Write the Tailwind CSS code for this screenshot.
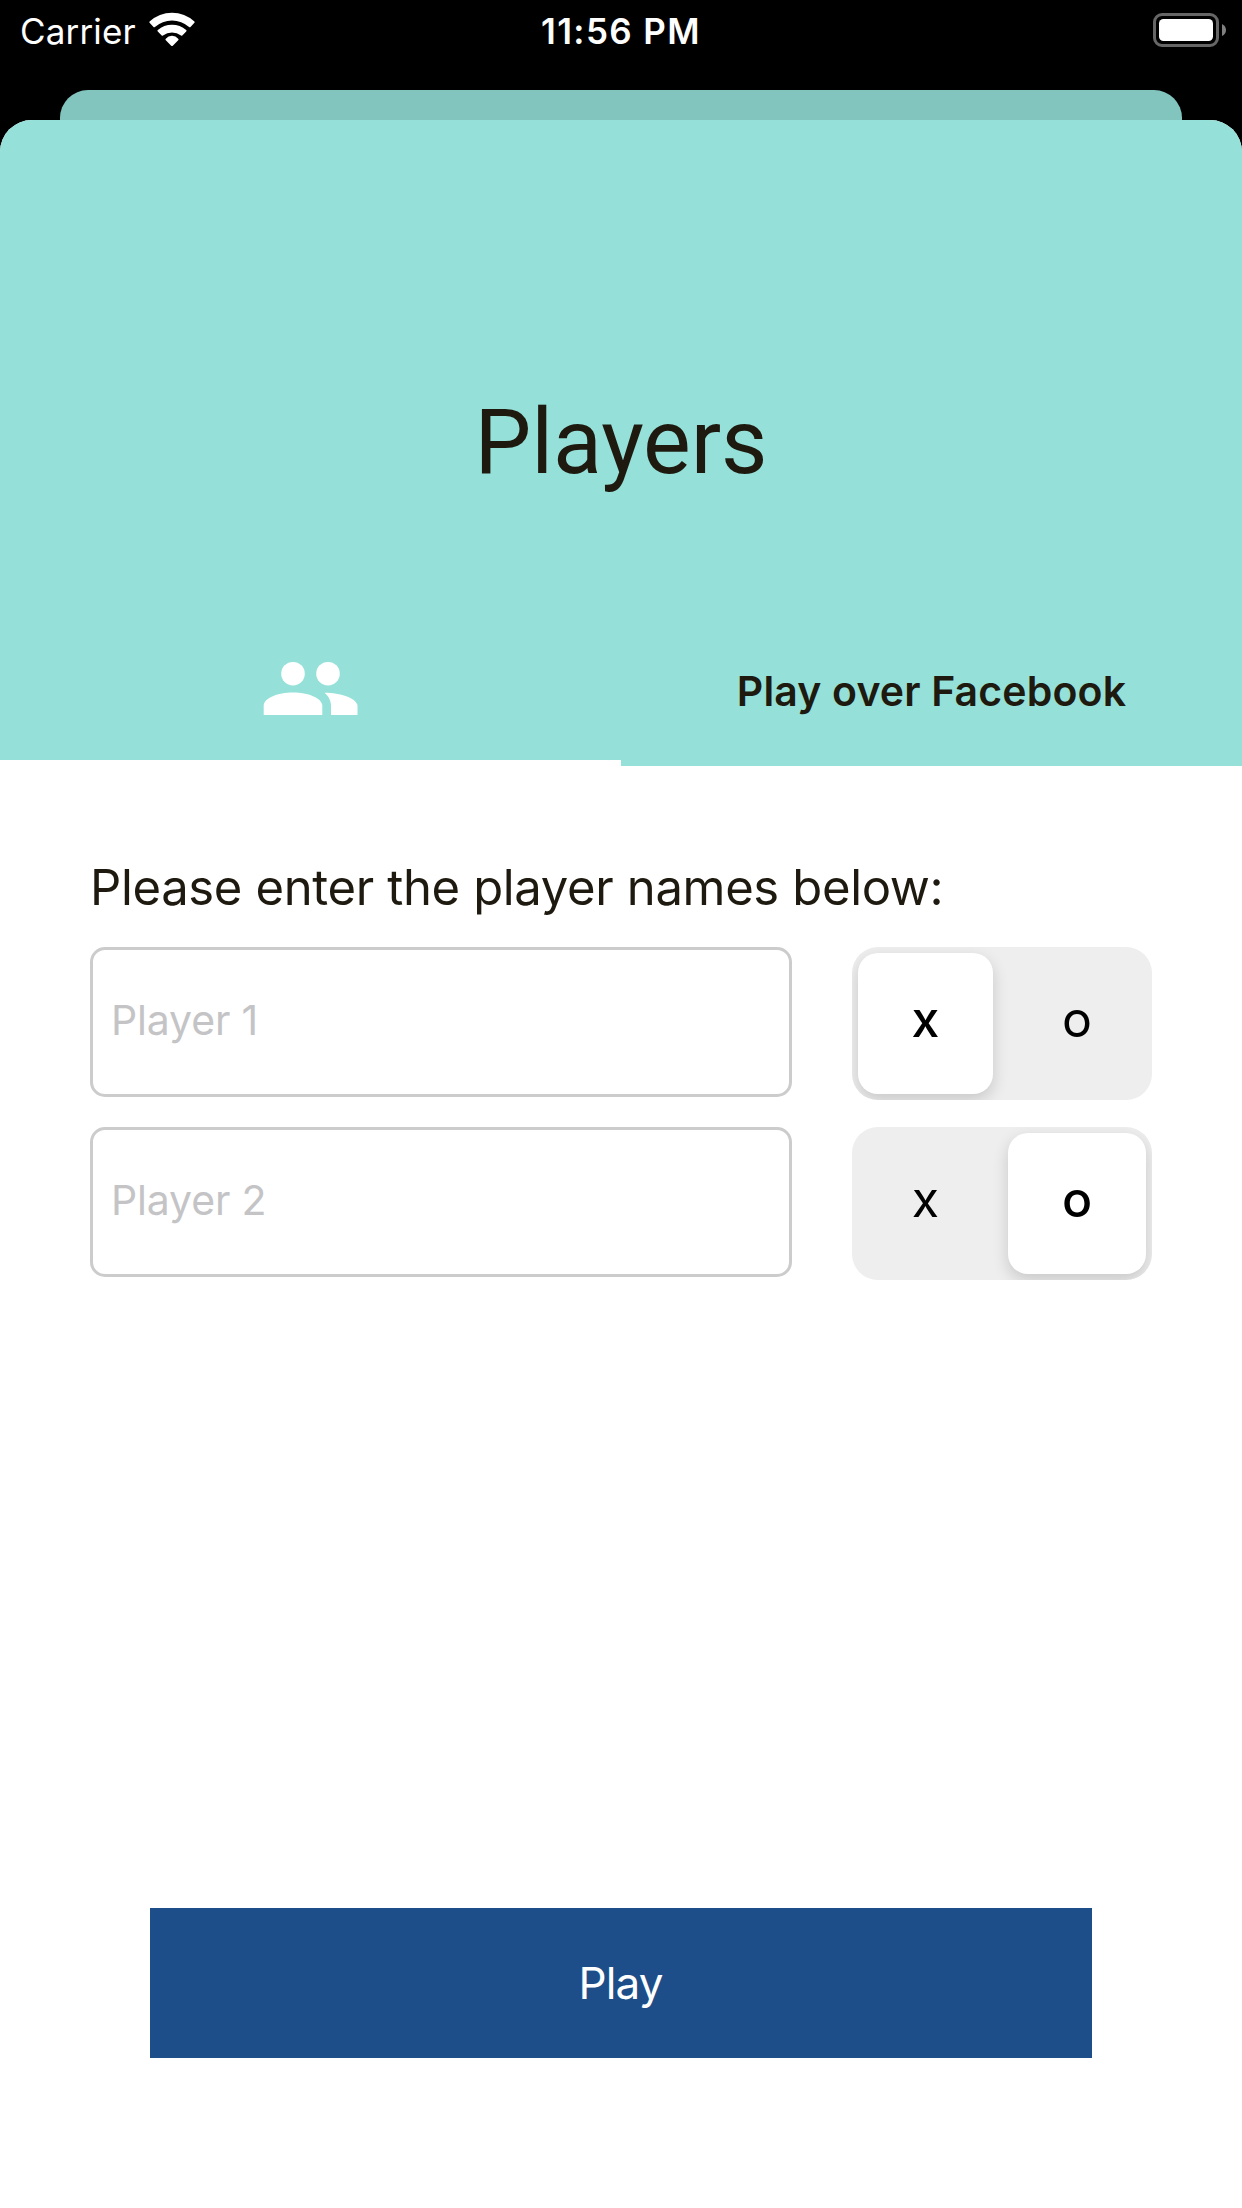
<!DOCTYPE html>
<html lang="en">
<head>
<meta charset="utf-8">
<title>Players</title>
<script src="https://cdn.jsdelivr.net/npm/@tailwindcss/browser@4"></script>
</head>
<body class="bg-black font-['Inter',sans-serif]">
<div class="flex h-[2208px] w-[1242px] flex-col overflow-hidden bg-black">
  <!-- Status bar -->
  <div class="flex h-[90px] shrink-0 items-start justify-between text-[35px] leading-[62px] text-white">
    <div class="flex w-[400px] items-start pl-5">
      <span class="whitespace-nowrap tracking-[0.15px]">Carrier</span>
      <svg class="ml-3 h-[62px] w-[48px]" viewBox="148 0 48 62" fill="#fff"><path d="M149.600 22.800a1 1 0 0 1 0-1.400a33 33 0 0 1 44.800 0a1 1 0 0 1 0 1.400l-3.900 4.200a1 1 0 0 1-1.400 0a26 26 0 0 0-34.200 0a1 1 0 0 1-1.400 0zM157.800 31.600a1 1 0 0 1 0-1.500a21.500 21.500 0 0 1 28.400 0a1 1 0 0 1 0 1.500l-3.900 3.900a1 1 0 0 1-1.300 0a15 15 0 0 0-18 0a1 1 0 0 1-1.300 0zM165.800 40.200a1 1 0 0 1 0-1.500a8 8 0 0 1 12.400 0a1 1 0 0 1 0 1.500l-5.400 5.500a1.100 1.100 0 0 1-1.600 0z"/></svg>
    </div>
    <span class="whitespace-nowrap font-semibold tracking-[1.4px]">11:56 PM</span>
    <div class="flex w-[400px] justify-end">
      <svg class="h-[62px] w-[90px]" viewBox="1152 0 90 62"><rect x="1154.500" y="14.500" width="63" height="31" rx="7.500" fill="none" stroke="#666" stroke-width="3"/><rect x="1159" y="19" width="54" height="22" rx="4.500" fill="#fff"/><path d="M1222 24q4 2 4 6t-4 6z" fill="#808080"/></svg>
    </div>
  </div>
  <!-- Card behind the sheet -->
  <div class="mx-[60px] h-[30px] shrink-0 rounded-t-[28px] bg-[#82c5be]"></div>
  <main class="flex grow flex-col overflow-hidden rounded-t-[32px] bg-white">
    <header class="flex h-[646px] shrink-0 flex-col bg-[#95e1d9] text-[#1e1a10]">
      <h1 class="flex h-[496px] items-end justify-center pb-[120px] font-['Roboto',sans-serif] text-[90px] leading-[106px] tracking-[-0.1px]">Players</h1>
      <nav class="grid h-[150px] grid-cols-2">
        <div class="flex items-start justify-center border-b-[6px] border-white pt-[44px]">
          <svg class="h-[56px] w-[96px]" viewBox="263 660 96 56" fill="#fff"><circle cx="293" cy="673.700" r="11.800"/><circle cx="328" cy="673.700" r="11.800"/><path d="M263.700 715v-10c1-7 14-12.500 29.300-12.500s28.300 5.500 29.300 12.500v10zM324.500 692.700c16 0 31 5 33 12.300v10h-26.500v-9c0-6-3-10.500-6.500-13.300z"/></svg>
        </div>
        <div class="flex items-center justify-center pt-[1px] text-[41px] font-semibold tracking-[0.15px]">Play over Facebook</div>
      </nav>
    </header>
    <section class="flex flex-col px-[90px] pt-[88px]">
      <p class="h-[93px] text-[49px] leading-[68px] tracking-[-0.35px] text-[#1e1a10]">Please enter the player names below:</p>
      <div class="flex h-[180px] items-start gap-[60px]">
        <div class="flex h-[150px] w-[702px] items-center rounded-[15px] border-[3px] border-[#ccc] px-[18px] pb-[2px] text-[41px] tracking-[-0.15px] text-[#c4c4c6]">Player 1</div>
        <div class="flex h-[153px] w-[300px] overflow-hidden rounded-[26px] bg-[#eee] p-[6px] text-[50px] text-black">
          <div class="flex w-[135px] items-center justify-center rounded-[20px] bg-white pb-[9px] font-medium shadow-[0_6px_16px_rgba(0,0,0,0.16)]">x</div>
          <div class="flex grow items-center justify-center pb-[9px] pl-[15px]">o</div>
        </div>
      </div>
      <div class="flex h-[180px] items-start gap-[60px]">
        <div class="flex h-[150px] w-[702px] items-center rounded-[15px] border-[3px] border-[#ccc] px-[18px] pb-[2px] text-[41px] tracking-[-0.15px] text-[#c4c4c6]">Player 2</div>
        <div class="flex h-[153px] w-[300px] overflow-hidden rounded-[26px] bg-[#eee] p-[6px] text-[50px] text-black">
          <div class="flex grow items-center justify-center pr-[15px] pb-[9px]">x</div>
          <div class="flex w-[138px] items-center justify-center rounded-[20px] bg-white pb-[9px] font-medium shadow-[0_6px_16px_rgba(0,0,0,0.16)]">o</div>
        </div>
      </div>
    </section>
    <button class="mx-[150px] mt-auto mb-[150px] flex h-[150px] items-center justify-center bg-[#1d4e89] pr-[1px] text-[44px] tracking-[-0.9px] text-white">Play</button>
  </main>
</div>
</body>
</html>
